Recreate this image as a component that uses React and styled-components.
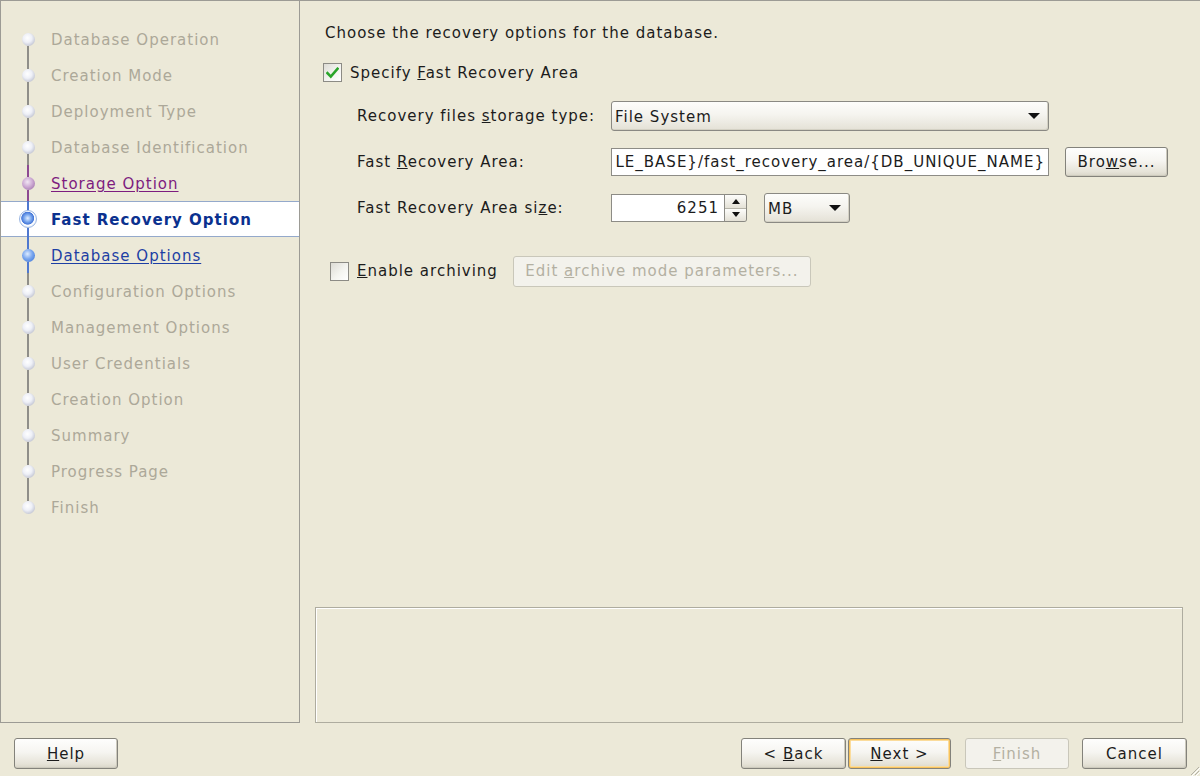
import React from 'react';
import styled, { createGlobalStyle, css } from 'styled-components';

const FONT = `"DejaVu Sans", Verdana, sans-serif`;
const LS = '1px';

const Global = createGlobalStyle`
  html, body { margin: 0; padding: 0; background: #ECE9D8; }
  body { font-family: ${FONT}; font-size: 15px; color: #1c1c1c; }
  * { box-sizing: border-box; }
`;

const Window = styled.div`
  width: 1200px;
  height: 776px;
  display: flex;
  flex-direction: column;
  background: #ECE9D8;
  position: relative;
  overflow: hidden;
  font-family: ${FONT};
  font-size: 15px;
  letter-spacing: ${LS};
`;

const Main = styled.div`
  display: flex;
  height: 723px;
`;

const Sidebar = styled.nav`
  width: 300px;
  border: 1px solid #9c9b95;
  padding-top: 20px;
  display: flex;
  flex-direction: column;
`;

const lineColors = {
  future: '#8f8e89',
  visited: '#8d4a92',
  current: '#4f78cf',
  link: '#4f78cf',
};

const labelColors = {
  future: '#aca899',
  visited: '#7d1c7f',
  current: '#0b318f',
  link: '#1d3fa4',
};

const Step = styled.div`
  height: 36px;
  display: flex;
  align-items: center;
  ${(p) =>
    p.$current &&
    css`
      background: #ffffff;
      box-shadow: inset 0 1px 0 #94a9cb, inset 0 -1px 0 #94a9cb;
    `}
`;

const Rail = styled.div`
  width: 22px;
  margin-left: 16px;
  margin-right: 12px;
  align-self: stretch;
  display: flex;
  flex-direction: column;
  align-items: center;
`;

const Seg = styled.div`
  flex: 1;
  width: 2px;
  background: ${(p) => p.$color};
  visibility: ${(p) => (p.$hidden ? 'hidden' : 'visible')};
`;

const dotBg = {
  future:
    'radial-gradient(circle at 42% 38%, #ffffff 0%, #eef0f7 40%, #bfc2d0 80%, #a3a6b5 100%)',
  visited:
    'radial-gradient(circle at 42% 38%, #f1e6f3 0%, #cdaad4 45%, #a276ad 85%, #8f659c 100%)',
  link:
    'radial-gradient(circle at 42% 38%, #dcebff 0%, #7aa7ef 45%, #477cda 85%, #3a6ccd 100%)',
};

const Dot = styled.div`
  flex: none;
  width: 13px;
  height: 13px;
  border-radius: 50%;
  background: ${(p) => dotBg[p.$state]};
`;

const CurrentDot = styled.div`
  flex: none;
  width: 18px;
  height: 18px;
  border-radius: 50%;
  border: 1px solid #9ab6e2;
  background: radial-gradient(
    circle at 48% 45%,
    #e3efff 0%,
    #80acef 28%,
    #4577d8 50%,
    #ffffff 56%,
    #eef3fb 72%,
    #c3d5ef 100%
  );
`;

const StepLabel = styled.span`
  padding-top: 2px;
  color: ${(p) => labelColors[p.$state]};
  font-weight: ${(p) => (p.$state === 'current' ? 'bold' : 'normal')};
  text-decoration: ${(p) =>
    p.$state === 'visited' || p.$state === 'link' ? 'underline' : 'none'};
  text-underline-offset: 2px;
  white-space: nowrap;
`;

const Content = styled.section`
  flex: 1;
  border-top: 1px solid #9c9b95;
  display: flex;
  flex-direction: column;
  padding: 22px 17px 0 15px;
`;

const Intro = styled.div`
  height: 20px;
  line-height: 20px;
  margin-left: 10px;
  white-space: nowrap;
`;

const CheckRow = styled.label`
  display: flex;
  align-items: center;
  gap: 8px;
  height: 19px;
  margin-top: ${(p) => p.$mt || 0}px;
  margin-left: ${(p) => p.$ml || 0}px;
  white-space: nowrap;
`;

const Box = styled.span`
  flex: none;
  width: 19px;
  height: 19px;
  border: 1px solid #8c8b85;
  background: linear-gradient(135deg, #dddcd5 0%, #f4f4f0 55%, #ffffff 100%);
  display: flex;
  align-items: center;
  justify-content: center;
`;

const Form = styled.div`
  display: grid;
  grid-template-columns: 238px 438px auto;
  grid-auto-rows: 30px;
  column-gap: 16px;
  row-gap: 16px;
  align-items: center;
  margin-top: 19px;
  margin-left: 42px;
`;

const Label = styled.span`
  white-space: nowrap;
`;

const Combo = styled.div`
  width: ${(p) => p.$w}px;
  height: 30px;
  border: 1px solid #8a8983;
  border-radius: 3px;
  background: linear-gradient(#fdfdfb 0%, #f5f4ef 45%, #e4e1d6 100%);
  box-shadow: inset -1px -1px 0 #d4d1c4;
  display: flex;
  align-items: center;
  justify-content: space-between;
  padding: 2px 8px 0 3px;
  white-space: nowrap;
`;

const Arrow = styled.span`
  width: 0;
  height: 0;
  border-left: 6px solid transparent;
  border-right: 6px solid transparent;
  border-top: 6px solid #111;
  margin-top: -2px;
`;

const Field = styled.div`
  height: 28px;
  border: 1px solid #8d8c86;
  background: #ffffff;
  display: flex;
  align-items: center;
  justify-content: flex-end;
  overflow: hidden;
  white-space: nowrap;
  padding: 0 3px 0 0;
`;

const PathField = styled(Field)`
  width: 438px;
`;

const SizeWrap = styled.div`
  display: flex;
  align-items: center;
  gap: 17px;
`;

const Spinner = styled.div`
  display: flex;
  align-items: stretch;
  height: 28px;
`;

const SizeField = styled(Field)`
  width: 114px;
  padding-right: 5px;
`;

const SpinButtons = styled.div`
  width: 22px;
  display: flex;
  flex-direction: column;
  border: 1px solid #8a8983;
  border-left: none;
  border-radius: 0 3px 3px 0;
  overflow: hidden;
`;

const SpinBtn = styled.div`
  flex: 1;
  display: flex;
  align-items: center;
  justify-content: center;
  background: linear-gradient(#fdfdfb, #e4e1d6);
  & + & {
    border-top: 1px solid #b5b3a8;
  }
`;

const Tri = styled.span`
  width: 0;
  height: 0;
  border-left: 4px solid transparent;
  border-right: 4px solid transparent;
  ${(p) =>
    p.$up
      ? css`border-bottom: 5px solid #111;`
      : css`border-top: 5px solid #111;`}
`;

const Button = styled.button`
  font-family: ${FONT};
  font-size: 15px;
  letter-spacing: ${LS};
  width: ${(p) => p.$w || 104}px;
  height: ${(p) => p.$h || 31}px;
  border: 1px solid #83827b;
  border-radius: 3px;
  background: linear-gradient(#fefefd 0%, #f6f5f1 45%, #e6e3d8 85%, #d8d5c8 100%);
  box-shadow: inset -1px -1px 0 #cdcabd;
  color: #1c1c1c;
  padding: 0;
  display: flex;
  align-items: center;
  justify-content: center;
  white-space: pre;
  cursor: default;
  ${(p) =>
    p.$default &&
    css`
      box-shadow: inset 0 0 0 1px #f7c25c, inset 0 0 0 2px #fbdc9c;
    `}
  ${(p) =>
    p.disabled &&
    css`
      border-color: #c9c7ba;
      background: #f3f2ec;
      box-shadow: none;
      color: #b3b0a2;
    `}
`;

const ArchiveRow = styled.div`
  display: flex;
  align-items: center;
  height: 30px;
  margin-top: 33px;
  margin-left: 15px;
`;

const ArchiveCheck = styled(CheckRow)`
  margin-right: 15px;
`;

const MessageBox = styled.div`
  margin-top: auto;
  height: 116px;
  border: 1px solid #aeac9f;
  box-shadow: inset 1px 1px 0 #ffffff;
`;

const Footer = styled.footer`
  flex: 1;
  display: flex;
  align-items: flex-start;
  padding: 15px 13px 0 14px;
`;

const Spacer = styled.div`
  flex: 1;
`;

const NavGroup = styled.div`
  display: flex;
  gap: ${(p) => p.$gap}px;
  margin-left: ${(p) => p.$ml || 0}px;
`;

const Grip = styled.svg`
  position: absolute;
  right: 0;
  bottom: 0;
`;

const steps = [
  ['Database Operation', 'future'],
  ['Creation Mode', 'future'],
  ['Deployment Type', 'future'],
  ['Database Identification', 'future'],
  ['Storage Option', 'visited'],
  ['Fast Recovery Option', 'current'],
  ['Database Options', 'link'],
  ['Configuration Options', 'future'],
  ['Management Options', 'future'],
  ['User Credentials', 'future'],
  ['Creation Option', 'future'],
  ['Summary', 'future'],
  ['Progress Page', 'future'],
  ['Finish', 'future'],
];

function CheckMark() {
  return (
    <svg width="13" height="12" viewBox="0 0 13 12">
      <path
        d="M1.5 6.2 L4.8 9.6 L11.5 1.8"
        fill="none"
        stroke="#2aa52a"
        strokeWidth="2.6"
        strokeLinecap="square"
      />
    </svg>
  );
}

export default function App() {
  return (
    <>
      <Global />
      <Window>
        <Main>
          <Sidebar>
            {steps.map(([label, state], i) => (
              <Step key={label} $current={state === 'current'}>
                <Rail>
                  <Seg $color={lineColors[state]} $hidden={i === 0} />
                  {state === 'current' ? <CurrentDot /> : <Dot $state={state} />}
                  <Seg $color={lineColors[state]} $hidden={i === steps.length - 1} />
                </Rail>
                <StepLabel $state={state}>{label}</StepLabel>
              </Step>
            ))}
          </Sidebar>
          <Content>
            <Intro>Choose the recovery options for the database.</Intro>
            <CheckRow $mt={20} $ml={8}>
              <Box>
                <CheckMark />
              </Box>
              <span>
                Specify <u>F</u>ast Recovery Area
              </span>
            </CheckRow>
            <Form>
              <Label>
                Recovery files <u>s</u>torage type:
              </Label>
              <Combo $w={438}>
                <span>File System</span>
                <Arrow />
              </Combo>
              <span />
              <Label>
                Fast <u>R</u>ecovery Area:
              </Label>
              <PathField>
                <span>{'LE_BASE}/fast_recovery_area/{DB_UNIQUE_NAME}'}</span>
              </PathField>
              <Button $w={103} $h={30}>
                <span>
                  Bro<u>w</u>se...
                </span>
              </Button>
              <Label>
                Fast Recovery Area si<u>z</u>e:
              </Label>
              <SizeWrap>
                <Spinner>
                  <SizeField>6251</SizeField>
                  <SpinButtons>
                    <SpinBtn>
                      <Tri $up />
                    </SpinBtn>
                    <SpinBtn>
                      <Tri />
                    </SpinBtn>
                  </SpinButtons>
                </Spinner>
                <Combo $w={86}>
                  <span>MB</span>
                  <Arrow />
                </Combo>
              </SizeWrap>
            </Form>
            <ArchiveRow>
              <ArchiveCheck>
                <Box />
                <span>
                  <u>E</u>nable archiving
                </span>
              </ArchiveCheck>
              <Button $w={298} $h={31} disabled>
                <span>
                  Edit <u>a</u>rchive mode parameters...
                </span>
              </Button>
            </ArchiveRow>
            <MessageBox />
          </Content>
        </Main>
        <Footer>
          <Button>
            <span>
              <u>H</u>elp
            </span>
          </Button>
          <Spacer />
          <NavGroup $gap={2}>
            <Button $w={105}>
              <span>
                &lt; <u>B</u>ack
              </span>
            </Button>
            <Button $w={103} $default>
              <span>
                <u>N</u>ext &gt;
              </span>
            </Button>
          </NavGroup>
          <NavGroup $gap={13} $ml={14}>
            <Button disabled>
              <span>
                <u>F</u>inish
              </span>
            </Button>
            <Button $w={105}>
              <span>Cancel</span>
            </Button>
          </NavGroup>
        </Footer>
        <Grip width="12" height="12" viewBox="0 0 12 12">
          <path d="M11 3 L3 11 M11 7 L7 11" stroke="#b3b1a5" strokeWidth="1" />
          <path d="M12 4 L4 12 M12 8 L8 12" stroke="#ffffff" strokeWidth="1" />
        </Grip>
      </Window>
    </>
  );
}
